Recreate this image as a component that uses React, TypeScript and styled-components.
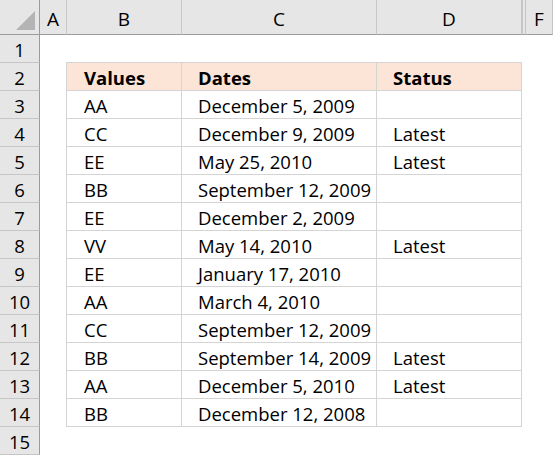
import React from "react";
import styled, { createGlobalStyle } from "styled-components";

const Global = createGlobalStyle`
  html, body { margin: 0; padding: 0; background: #fff; }
  body { font-family: "Open Sans", "Noto Sans", sans-serif; }
`;

const COLS = [
  { key: "rh", w: 40 },
  { key: "A", w: 27 },
  { key: "B", w: 115 },
  { key: "C", w: 195 },
  { key: "D", w: 145 },
  { key: "E", w: 4, hidden: true },
  { key: "F", w: 27 },
  { key: "G", w: 30 },
];

const template = COLS.map((c) => `${c.w}px`).join(" ");

const Sheet = styled.div`
  width: 553px;
  height: 457px;
  overflow: hidden;
  display: grid;
  grid-template-columns: ${template};
  grid-template-rows: 35px repeat(15, 28px);
  font-size: 18.5px;
  color: #000;
`;

const Corner = styled.div`
  background: #e6e6e6;
  border-right: 1px solid #9b9b9b;
  border-bottom: 1px solid #9b9b9b;
  box-sizing: border-box;
  position: relative;
  &::after {
    content: "";
    position: absolute;
    right: 4px;
    bottom: 4px;
    width: 0;
    height: 0;
    border-left: 19px solid transparent;
    border-bottom: 19px solid #b4b4b4;
  }
`;

const ColHead = styled.div<{ $hidden?: boolean }>`
  background: #e6e6e6;
  border-right: 1px solid #c6c6c6;
  border-bottom: 1px solid #9b9b9b;
  border-left: ${(p) => (p.$hidden ? "1px solid #c6c6c6" : "none")};
  box-sizing: border-box;
  display: flex;
  align-items: center;
  justify-content: center;
  padding-top: 3px;
  font-size: 19px;
`;

const RowHead = styled.div`
  background: #e6e6e6;
  border-right: 1px solid #9b9b9b;
  border-bottom: 1px solid #c6c6c6;
  box-sizing: border-box;
  display: flex;
  align-items: center;
  justify-content: center;
  padding-top: 2px;
  font-size: 18.5px;
`;

const Empty = styled.div``;

const Cell = styled.div<{ $head?: boolean; $first?: boolean; $left?: boolean }>`
  background: ${(p) => (p.$head ? "#fce4d6" : "#fff")};
  border-right: 1px solid #d4d4d4;
  border-bottom: 1px solid #d4d4d4;
  border-top: ${(p) => (p.$first ? "1px solid #d4d4d4" : "none")};
  border-left: ${(p) => (p.$left ? "1px solid #d4d4d4" : "none")};
  margin-top: ${(p) => (p.$first ? "-1px" : "0")};
  margin-left: ${(p) => (p.$left ? "-1px" : "0")};
  box-sizing: border-box;
  display: flex;
  align-items: center;
  padding-top: 2px;
  padding-left: ${(p) => (p.$left ? "17px" : "16px")};
  font-weight: ${(p) => (p.$head ? 700 : 400)};
  white-space: nowrap;
`;

const data: [string, string, string][] = [
  ["AA", "December 5, 2009", ""],
  ["CC", "December 9, 2009", "Latest"],
  ["EE", "May 25, 2010", "Latest"],
  ["BB", "September 12, 2009", ""],
  ["EE", "December 2, 2009", ""],
  ["VV", "May 14, 2010", "Latest"],
  ["EE", "January 17, 2010", ""],
  ["AA", "March 4, 2010", ""],
  ["CC", "September 12, 2009", ""],
  ["BB", "September 14, 2009", "Latest"],
  ["AA", "December 5, 2010", "Latest"],
  ["BB", "December 12, 2008", ""],
];

export default function App() {
  const cells: React.ReactNode[] = [];
  cells.push(<Corner key="corner" />);
  COLS.slice(1).forEach((c) =>
    cells.push(
      <ColHead key={`h${c.key}`} $hidden={c.hidden}>
        {c.hidden || c.key === "G" ? "" : c.key}
      </ColHead>
    )
  );
  const rows: (string[] | null)[] = [
    null,
    ["Values", "Dates", "Status"],
    ...data,
    null,
  ];
  rows.forEach((r, i) => {
    cells.push(<RowHead key={`r${i}`}>{i + 1}</RowHead>);
    cells.push(<Empty key={`a${i}`} />);
    if (r) {
      r.forEach((v, j) => (
        cells.push(
          <Cell key={`c${i}-${j}`} $head={i === 1} $first={i === 1} $left={j === 0}>
            {v}
          </Cell>
        )
      ));
    } else {
      [0, 1, 2].forEach((j) => cells.push(<Empty key={`e${i}-${j}`} />));
    }
    cells.push(<Empty key={`x${i}`} />);
    cells.push(<Empty key={`f${i}`} />);
    cells.push(<Empty key={`g${i}`} />);
  });
  return (
    <>
      <Global />
      <Sheet>{cells}</Sheet>
    </>
  );
}
